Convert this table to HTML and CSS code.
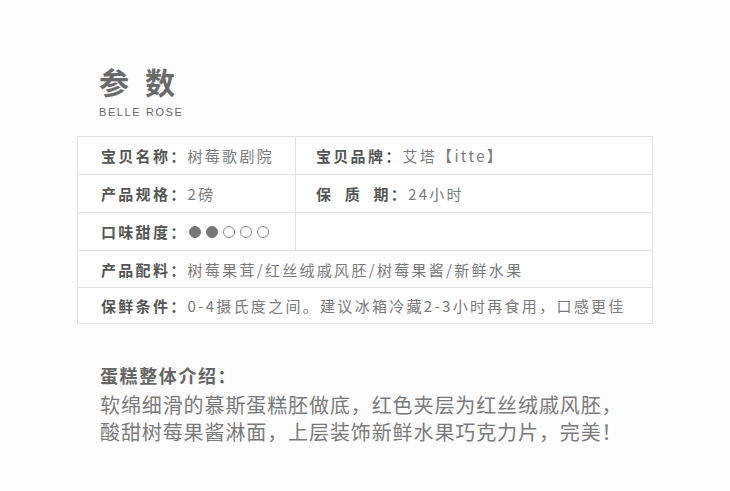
FILE: index.html
```html
<!DOCTYPE html>
<html lang="zh">
<head>
<meta charset="utf-8">
<link rel="stylesheet" href="styles.css">
</head>
<body>
<div class="page">
  <header class="head">
    <h1 class="title">参数</h1>
    <div class="sub">BELLE ROSE</div>
  </header>
  <div class="table">
    <div class="row split">
      <div class="cell"><span class="lab">宝贝名称：</span><span class="val">树莓歌剧院</span></div>
      <div class="cell"><span class="lab">宝贝品牌：</span><span class="val">艾塔【itte】</span></div>
    </div>
    <div class="row split">
      <div class="cell"><span class="lab">产品规格：</span><span class="val">2磅</span></div>
      <div class="cell"><span class="lab">保&nbsp;&nbsp;质&nbsp;&nbsp;期：</span><span class="val">24小时</span></div>
    </div>
    <div class="row split">
      <div class="cell"><span class="lab">口味甜度：</span><span class="dots"><i class="dot on"></i><i class="dot on"></i><i class="dot"></i><i class="dot"></i><i class="dot"></i></span></div>
      <div class="cell"></div>
    </div>
    <div class="row short">
      <div class="cell"><span class="lab">产品配料：</span><span class="val">树莓果茸/红丝绒戚风胚/树莓果酱/新鲜水果</span></div>
    </div>
    <div class="row shorter">
      <div class="cell"><span class="lab">保鲜条件：</span><span class="val">0-4摄氏度之间。建议冰箱冷藏2-3小时再食用，口感更佳</span></div>
    </div>
  </div>
  <section class="intro">
    <h2 class="intro-title">蛋糕整体介绍：</h2>
    <p class="intro-text">软绵细滑的慕斯蛋糕胚做底，红色夹层为红丝绒戚风胚，<br>酸甜树莓果酱淋面，上层装饰新鲜水果巧克力片，完美！</p>
  </section>
</div>
</body>
</html>
```
FILE: styles.css
```css
html, body {
  margin: 0;
  padding: 0;
  background: #fdfdfd;
}
* {
  box-sizing: border-box;
}
body {
  font-family: "Noto Sans CJK SC", "Noto Sans", sans-serif;
  width: 730px;
  height: 491px;
  overflow: hidden;
}
.page {
  padding: 66px 0 0 77px;
}
.head {
  padding-left: 22px;
}
.title {
  margin: 0;
  font-size: 30px;
  line-height: 30px;
  font-weight: 700;
  color: #6a6a6a;
  letter-spacing: 16px;
}
.sub {
  margin-top: 10px;
  font-family: "Liberation Sans", Arial, sans-serif;
  font-size: 11px;
  line-height: 12px;
  letter-spacing: 1.6px;
  color: #666;
}
.table {
  margin-top: 18px;
  width: 576px;
  border: 1px solid #e2e2e2;
  border-bottom: none;
  background: #fff;
}
.row {
  display: flex;
  height: 38px;
  border-bottom: 1px solid #e2e2e2;
}
.row.short {
  height: 37px;
}
.row.shorter {
  height: 36px;
}
.row.split .cell:first-child {
  width: 218px;
  flex: none;
  border-right: 1px solid #e2e2e2;
}
.cell {
  flex: 1;
  display: flex;
  align-items: center;
  padding-left: 23px;
  font-size: 15px;
  letter-spacing: 2.3px;
  white-space: nowrap;
}
.row.split .cell + .cell {
  padding-left: 20px;
}
.lab {
  color: #555;
  font-weight: 700;
}
.val {
  color: #7a7a7a;
}
.dots {
  display: flex;
  gap: 5px;
  margin-left: 1px;
}
.dot {
  width: 12px;
  height: 12px;
  border-radius: 50%;
  border: 1.5px solid #8a8a8a;
}
.dot.on {
  background: #777;
  border-color: #777;
}
.intro {
  padding: 39px 0 0 23px;
}
.intro-title {
  margin: 0;
  font-size: 18px;
  line-height: 24px;
  font-weight: 700;
  color: #666;
  letter-spacing: 1.6px;
}
.intro-text {
  margin: 4px 0 0;
  font-size: 20px;
  line-height: 27px;
  color: #7a7a7a;
  letter-spacing: 0.9px;
}
```
